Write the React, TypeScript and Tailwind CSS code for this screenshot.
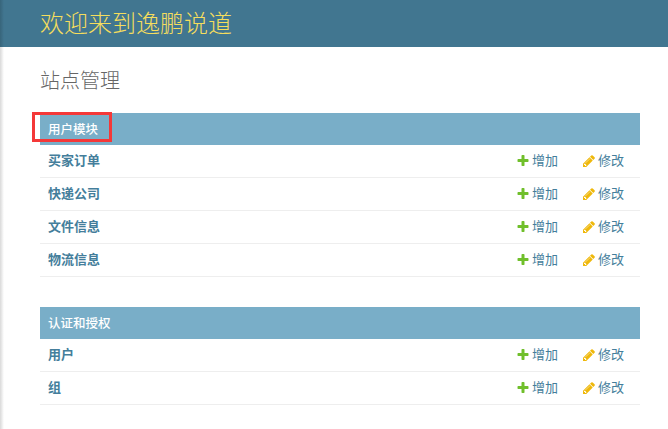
const sections = [
  { title: "用户模块", rows: ["买家订单", "快递公司", "文件信息", "物流信息"] },
  { title: "认证和授权", rows: ["用户", "组"] },
];

const AddIcon = () => (
  <svg viewBox="0 0 1792 1792" className="w-[14px] h-[14px] mr-[2px] mt-px shrink-0">
    <path
      fill="#70bf2b"
      d="M1600 736v192q0 40-28 68t-68 28h-416v416q0 40-28 68t-68 28h-192q-40 0-68-28t-28-68v-416h-416q-40 0-68-28t-28-68v-192q0-40 28-68t68-28h416v-416q0-40 28-68t68-28h192q40 0 68 28t28 68v416h416q40 0 68 28t28 68z"
    />
  </svg>
);

const ChangeIcon = () => (
  <svg viewBox="0 0 1792 1792" className="w-[14px] h-[14px] mr-[2px] mt-px shrink-0">
    <path
      fill="#efb80b"
      d="M491 1536l91-91-235-235-91 91v107h128v128h107zm523-928q0-22-22-22-10 0-17 7l-542 542q-7 7-7 17 0 22 22 22 10 0 17-7l542-542q7-7 7-17zm-54-192l416 416-832 832h-416v-416zm683 96q0 53-37 90l-166 166-416-416 166-165q36-38 90-38 53 0 91 38l235 234q37 39 37 91z"
    />
  </svg>
);

const ModelRow = ({ name }: { name: string }) => (
  <div className="flex items-center h-[33px] border-b border-[#eeeeee] pl-2 pr-4 pb-[2px] text-[13px] text-[#447e9b]">
    <span className="font-bold flex-1">{name}</span>
    <span className="flex items-center w-[65px] pl-px">
      <AddIcon />
      增加
    </span>
    <span className="flex items-center w-[44px] pl-[2px]">
      <ChangeIcon />
      修改
    </span>
  </div>
);

export default function App() {
  return (
    <div
      className="relative min-h-[429px] bg-white overflow-hidden"
      style={{ fontFamily: '"Noto Sans CJK SC", "Liberation Sans", sans-serif' }}
    >
      <header className="h-[47px] bg-[#417690] flex items-center pl-10 pb-1 text-2xl font-light text-[#f5dd5d]">
        欢迎来到逸鹏说道
      </header>
      <main className="px-10 w-[640px] box-content">
        <h1 className="text-xl font-light text-[#666666] mt-5 mb-5 leading-[26px]">站点管理</h1>
        <div className="w-[600px] flex flex-col gap-[30px]">
          {sections.map((section) => (
            <section key={section.title}>
              <div className="h-8 flex items-center pl-2 bg-[#79aec8] text-white text-[12.5px] font-medium">
                {section.title}
              </div>
              {section.rows.map((row) => (
                <ModelRow key={row} name={row} />
              ))}
            </section>
          ))}
        </div>
      </main>
      <div className="absolute left-0 top-0 bottom-0 w-[4px] bg-gradient-to-r from-black/15 to-transparent" />
      <div className="absolute left-[32px] top-[112px] w-[80px] h-[30px] border-[3px] border-[#f43838]" />
    </div>
  );
}
